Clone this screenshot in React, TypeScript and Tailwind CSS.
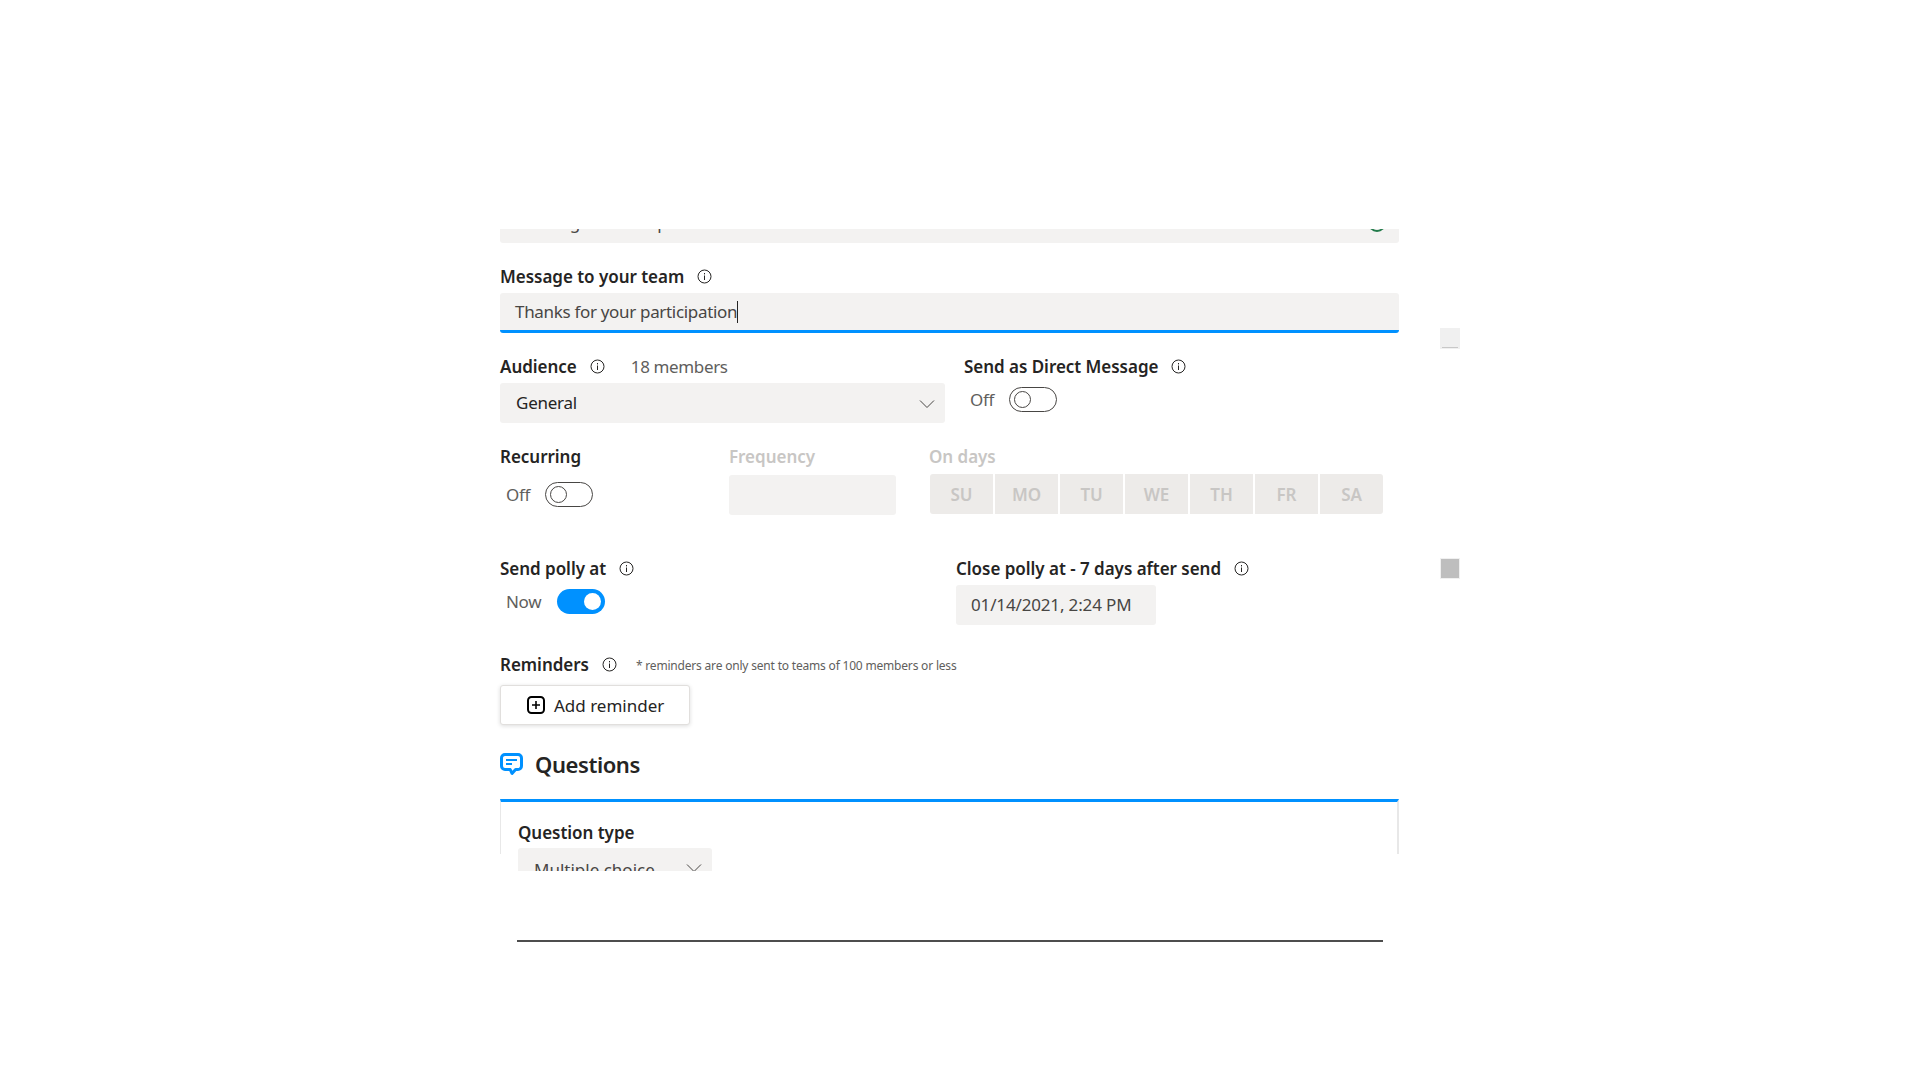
import React from "react";

const font = { fontFamily: '"Noto Sans", "Open Sans", sans-serif' };

const InfoIcon = () => (
  <svg width="15" height="15" viewBox="0 0 15 15" fill="none" className="shrink-0">
    <circle cx="7.5" cy="7.5" r="6.5" stroke="#252423" strokeWidth="1" />
    <rect x="7" y="6.5" width="1" height="4.5" fill="#252423" />
    <rect x="7" y="4" width="1" height="1.4" fill="#252423" />
  </svg>
);

const Chevron = () => (
  <svg width="16" height="10" viewBox="0 0 16 10" fill="none">
    <path d="M1 1.5 L8 8.5 L15 1.5" stroke="#484644" strokeWidth="1" />
  </svg>
);

const Label = ({ text, info, muted }: { text: string; info?: boolean; muted?: boolean }) => (
  <div className="flex items-center h-5 gap-[13px]">
    <span className={`pt-[2px] text-[17px] leading-5 font-semibold tracking-[-0.03px] ${muted ? "text-[#c8c6c4]" : "text-[#252423]"}`}>
      {text}
    </span>
    {info && <InfoIcon />}
  </div>
);

const Toggle = ({ label, on }: { label: string; on?: boolean }) => (
  <div className={`flex items-center pl-[6px] ${on ? "gap-4" : "gap-[15px]"}`}>
    <span className="text-[17px] leading-5 text-[#605e5c] tracking-[-0.3px]">{label}</span>
    {on ? (
      <div className="w-12 h-[25px] rounded-full bg-[#0091ff] flex items-center justify-end pr-1">
        <div className="w-[17px] h-[17px] rounded-full bg-white" />
      </div>
    ) : (
      <div className="w-12 h-[25px] rounded-full border border-[#484644] flex items-center pl-1">
        <div className="w-[17px] h-[17px] rounded-full border border-[#484644]" />
      </div>
    )}
  </div>
);

const days = ["SU", "MO", "TU", "WE", "TH", "FR", "SA"];

export default function App() {
  return (
    <div className="w-[1920px] h-[1080px] bg-white overflow-hidden pt-[229px] pl-[500px] flex" style={font}>
      <div className="w-[899px] shrink-0">
        <div className="h-[14px] overflow-hidden bg-[#f3f2f1] rounded-b-[3px]">
          <div className="-mt-[26px] h-10 flex items-center justify-between pl-4 pr-[13px]">
            <span className="text-[17px] text-[#484644] tracking-[-0.3px]">Meeting attendee poll</span>
            <svg width="18" height="18" viewBox="0 0 18 18" fill="none">
              <circle cx="9" cy="9" r="8" stroke="#237b4b" strokeWidth="2" />
            </svg>
          </div>
        </div>

        <div className="mt-[23px]">
          <Label text="Message to your team" info />
        </div>
        <div className="mt-[7px] h-10 bg-[#f3f2f1] border-b-[3px] border-[#0091ff] rounded-[3px] flex items-center pl-[15px]">
          <span className="text-[17px] leading-5 text-[#484644] tracking-[-0.32px]">Thanks for your participation</span>
          <div className="w-px h-[22px] bg-[#252423]" />
        </div>

        <div className="mt-[23px] flex">
          <div className="w-[445px]">
            <div className="flex items-center h-5">
              <Label text="Audience" info />
              <span className="ml-[26px] pt-[2px] text-[17px] leading-5 text-[#605e5c] tracking-[-0.36px]">18 members</span>
            </div>
            <div className="mt-[7px] h-10 bg-[#f3f2f1] rounded-[3px] flex items-center justify-between pl-4 pr-[10px]">
              <span className="text-[17px] text-[#252423] tracking-[-0.25px]">General</span>
              <div className="pt-[2px]">
                <Chevron />
              </div>
            </div>
          </div>
          <div className="ml-[19px]">
            <Label text="Send as Direct Message" info />
            <div className="mt-[11px]">
              <Toggle label="Off" />
            </div>
          </div>
        </div>

        <div className="mt-[23px] flex">
          <div className="w-[229px]">
            <Label text="Recurring" />
            <div className="mt-[16px]">
              <Toggle label="Off" />
            </div>
          </div>
          <div className="w-[167px]">
            <Label text="Frequency" muted />
            <div className="mt-[9px] h-10 bg-[#f3f2f1] rounded-[3px]" />
          </div>
          <div className="ml-[33px]">
            <Label text="On days" muted />
            <div className="mt-[8px] ml-px flex gap-[2px]">
              {days.map((d) => (
                <div
                  key={d}
                  className="w-[63px] h-10 pt-[2px] bg-[#edebe9] first:rounded-l-[3px] last:rounded-r-[3px] flex items-center justify-center text-[17px] font-semibold text-[#c8c6c4] tracking-[-0.1px]"
                >
                  {d}
                </div>
              ))}
            </div>
          </div>
        </div>

        <div className="mt-[43px] flex">
          <div className="w-[456px]">
            <Label text="Send polly at" info />
            <div className="mt-[11px]">
              <Toggle label="Now" on />
            </div>
          </div>
          <div>
            <Label text="Close polly at - 7 days after send" info />
            <div className="mt-[7px] w-[200px] h-10 bg-[#f3f2f1] rounded-[3px] flex items-center pl-[15px] text-[17px] text-[#484644] tracking-[-0.15px]">
              01/14/2021, 2:24 PM
            </div>
          </div>
        </div>

        <div className="mt-[28px] flex items-center">
          <Label text="Reminders" info />
          <span className="ml-[19px] mt-[4px] text-[12px] text-[#605e5c] tracking-[-0.19px]">
            * reminders are only sent to teams of 100 members or less
          </span>
        </div>
        <div className="mt-[10px] w-[190px] h-10 bg-white border border-[#e1dfdd] rounded-[3px] shadow-[0_1px_4px_rgba(0,0,0,0.14)] flex items-center pl-[26px] gap-[9px]">
          <svg width="18" height="18" viewBox="0 0 18 18" fill="none">
            <rect x="1" y="1" width="16" height="16" rx="3.5" stroke="#000" strokeWidth="2" />
            <path d="M9 5v8M5 9h8" stroke="#000" strokeWidth="1.6" />
          </svg>
          <span className="pt-[2px] text-[17px] leading-5 text-[#252423]">Add reminder</span>
        </div>

        <div className="mt-[24px] h-[30px] flex items-center gap-[12px]">
          <svg width="23" height="23" viewBox="0 0 23 23" fill="none">
            <path
              d="M5 1.5h13a3.5 3.5 0 0 1 3.5 3.5v8a3.5 3.5 0 0 1-3.5 3.5h-2.4l-3.6 4-1.8-4H5A3.5 3.5 0 0 1 1.5 13V5A3.5 3.5 0 0 1 5 1.5z"
              stroke="#0091ff"
              strokeWidth="3"
              strokeLinejoin="round"
            />
            <path d="M6 7h11M6 11h6" stroke="#0091ff" strokeWidth="2" />
          </svg>
          <span className="text-[22px] leading-[30px] font-semibold text-[#252423] tracking-[-0.42px]">Questions</span>
        </div>

        <div className="mt-[20px] h-[72px] overflow-hidden">
          <div className="h-[55px] border-t-[3px] border-t-[#0091ff] border-l border-l-[#e8e8e8] border-r-2 border-r-[#e8e8e8] pl-[17px] pt-[20px]">
            <Label text="Question type" />
            <div className="mt-[6px] w-[194px] h-10 bg-[#f3f2f1] rounded-[3px] flex items-center justify-between pl-4 pr-[10px]">
              <span className="pt-1 text-[17px] text-[#484644]">Multiple choice</span>
              <Chevron />
            </div>
          </div>
        </div>

        <div className="mt-[69px] ml-[17px] w-[866px] h-[2px] bg-[#4d4d4d]" />
      </div>

      <div className="ml-[41px] w-5">
        <div className="mt-[99px] h-[21px] bg-[#f0f0f0] flex items-end justify-center pb-[1px]">
          <div className="w-4 h-px bg-[#c8c8c8]" />
        </div>
        <div className="mt-[209px] h-[21px] bg-[#f0f0f0] p-[1px]">
          <div className="h-full bg-[#bebebe]" />
        </div>
      </div>
    </div>
  );
}
